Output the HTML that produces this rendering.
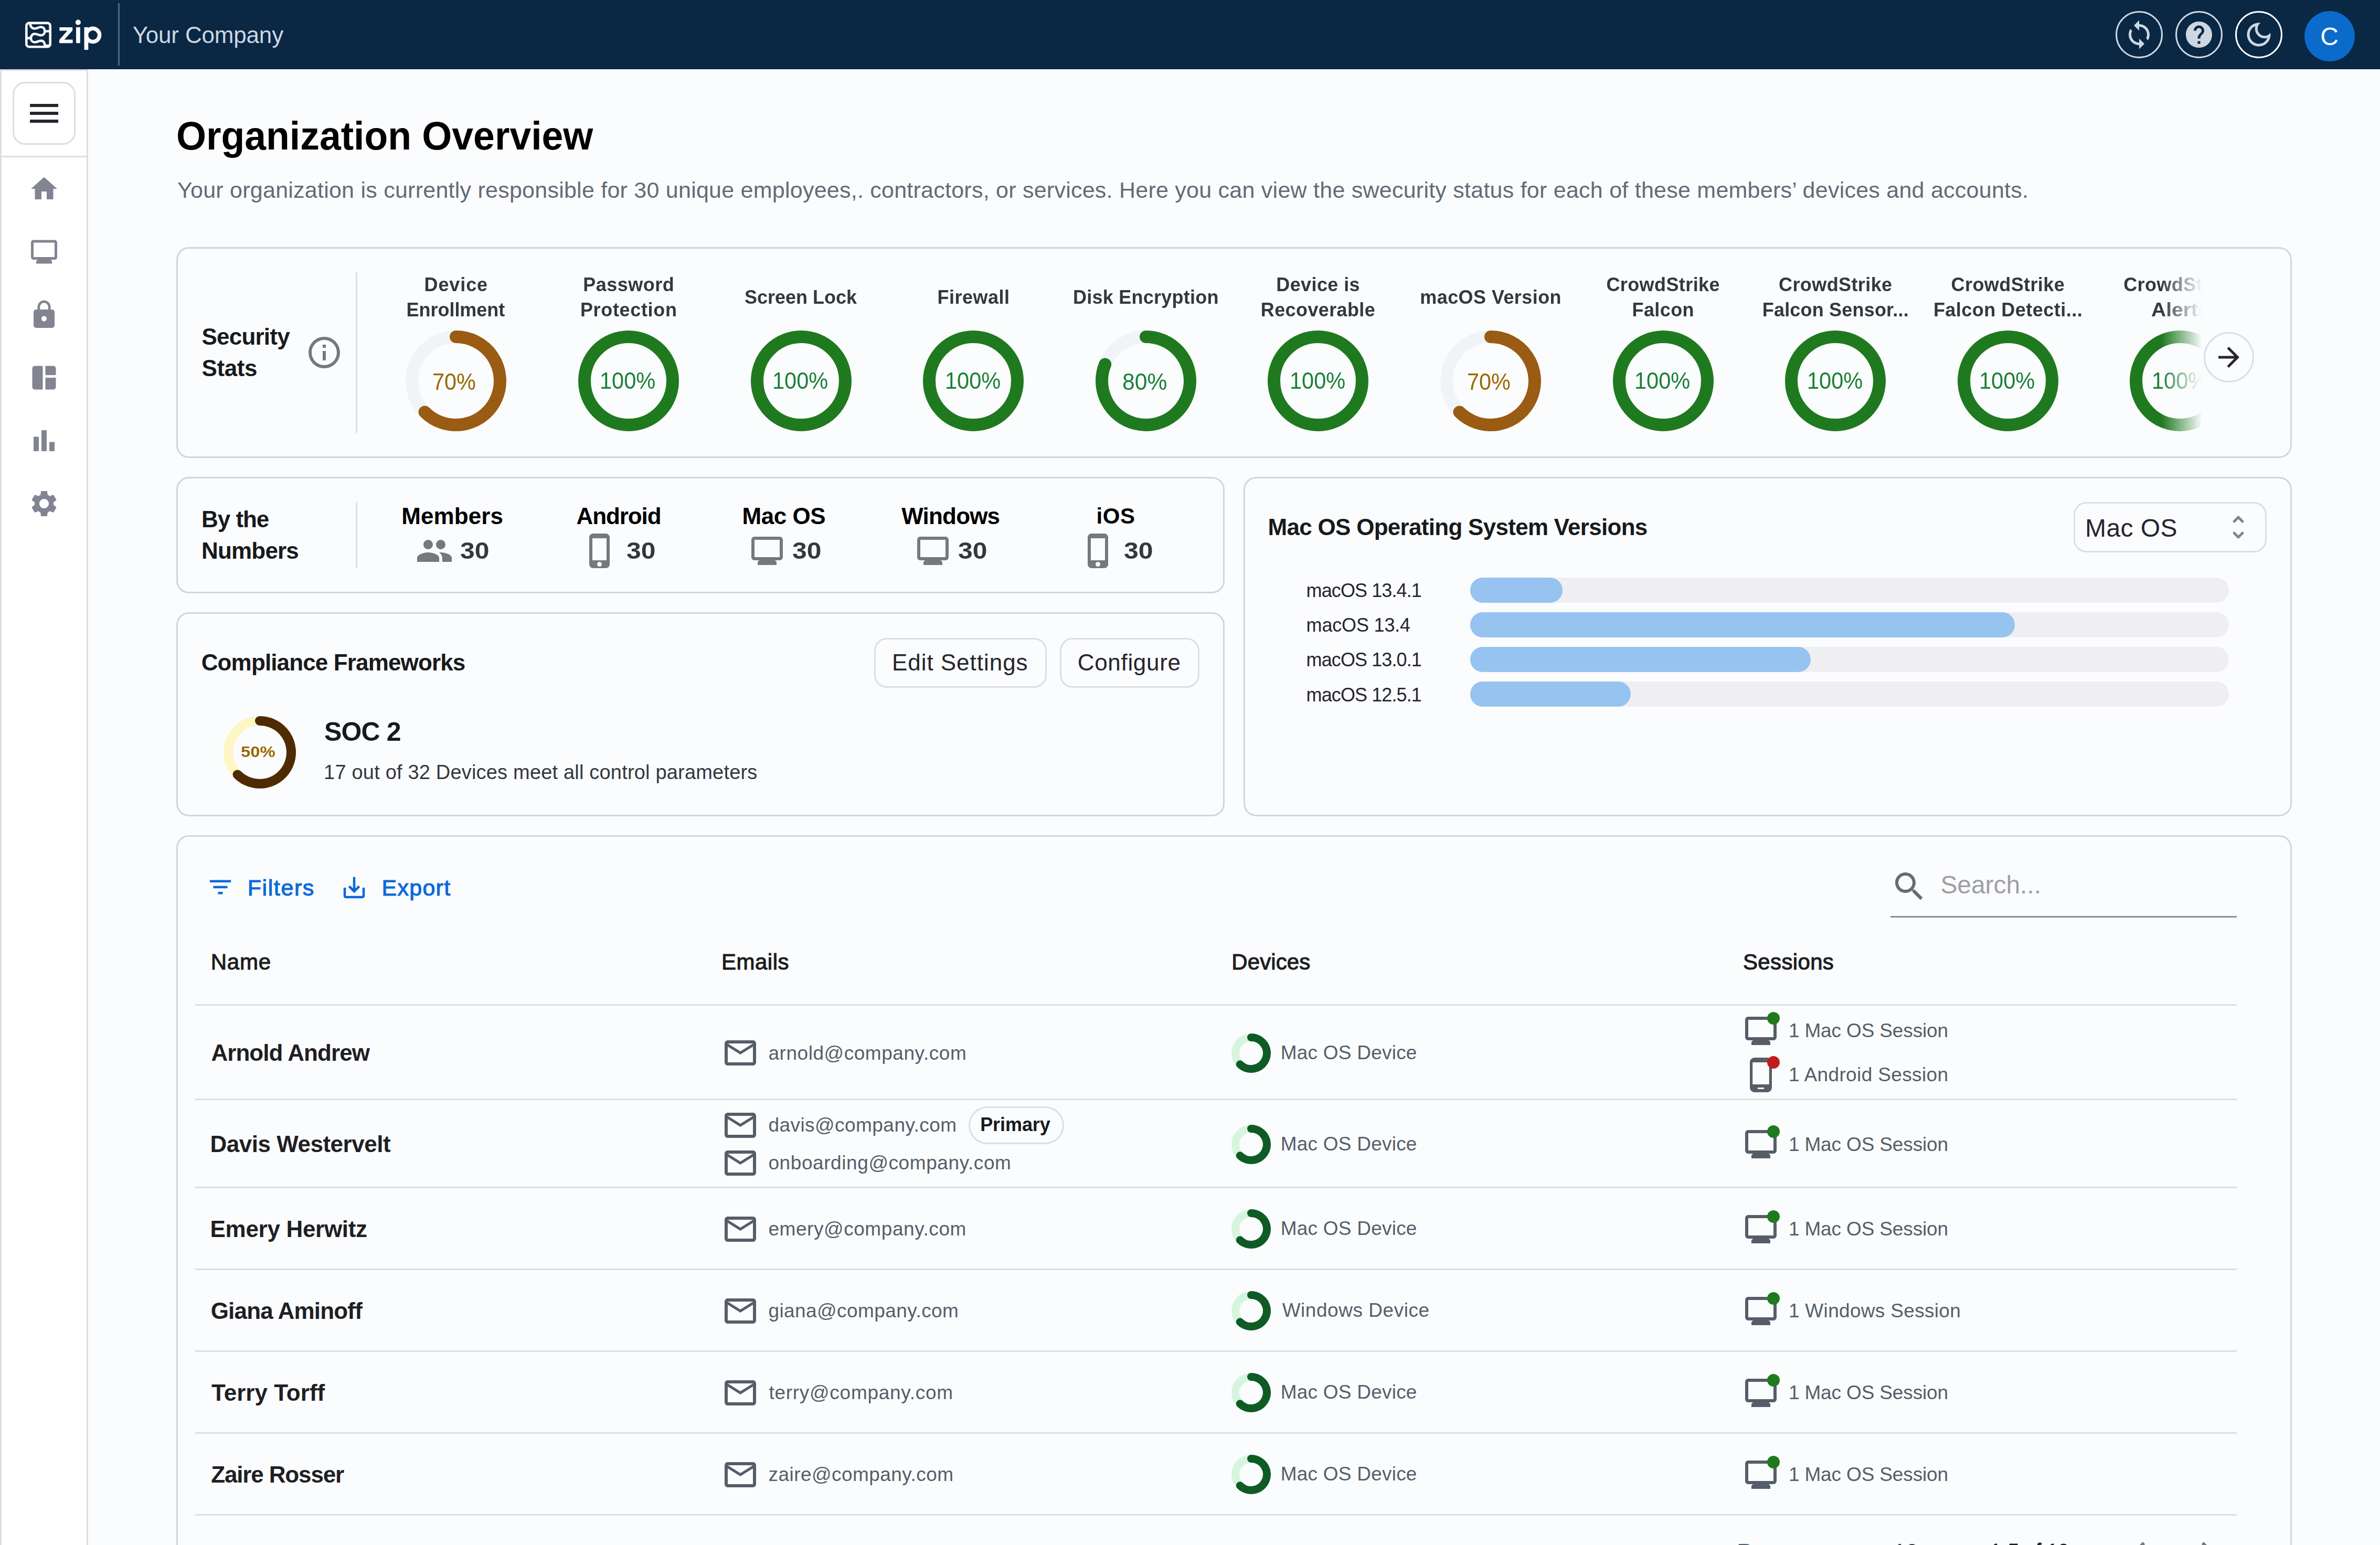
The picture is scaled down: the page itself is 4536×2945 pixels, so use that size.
<!DOCTYPE html>
<html lang="en"><head><meta charset="utf-8"><title>Organization Overview</title>
<style>
html,body{margin:0;padding:0}
body{width:4536px;height:2945px;overflow:hidden;position:relative;background:#FBFCFE;font-family:"Liberation Sans",sans-serif;}
#root{position:absolute;left:0;top:0;width:4536px;height:2945px;overflow:hidden;}
#root div,.a{position:absolute;}
.t{position:absolute;white-space:nowrap;line-height:1;transform-origin:0 0;}
svg{display:block;overflow:visible}
</style></head>
<body><div id="root">
<div style="left:0px;top:0px;width:4536px;height:132px;background:#0A2744;"></div>
<svg class="a" style="left:47.7px;top:41px" width="50" height="51" viewBox="0 -0.55 50 51" fill="none" stroke="#FAFAFA" stroke-width="4.6">
<rect x="2.3" y="2.3" width="45.4" height="45.4" rx="5.2"/>
<path d="M9.4 2.3 C9.4 8.6 12.6 13 18.2 13 C23 13 25 9.9 30 9.9 C34.5 9.9 37.3 13.5 37.3 17.9 C37.3 22.4 34.5 25.8 30 25.8 C25 25.8 23 23 18.2 23 C14 23 10.9 26.6 10.9 31.1 C10.9 35.6 14 38.9 18.2 38.9 C23 38.9 25 36.1 30 36.1 C34.5 36.1 37.3 39.5 37.6 45.4 L47 45.4"/>
<path d="M37.3 17.9 H47.7 M2.3 31.1 H10.9"/>
</svg>
<svg class="a" style="left:0;top:0" width="240" height="132" viewBox="0 0 240 132" fill="#FAFAFA"><path d="M113.4 51.9H138.2V58.2L122.6 75.6H138.6V82.2H113V75.9L128.4 58.5H113.4Z"/><rect x="145" y="51.9" width="7.8" height="30.3"/><circle cx="148.9" cy="42.6" r="5.1"/><rect x="160.5" y="51.9" width="7.8" height="43.1"/><circle cx="177" cy="66.9" r="12.6" fill="none" stroke="#FAFAFA" stroke-width="7.5"/></svg>
<div style="left:225px;top:6px;width:3px;height:119px;background:#4B6886;"></div>
<span class="t" style="left:252.63px;top:44.82px;font-size:44px;color:#CDD7E1;letter-spacing:-0.172px;">Your Company</span>
<div style="left:4032px;top:21px;width:90px;height:90px;border:3px solid #CDD7E1;border-radius:50%;box-sizing:border-box;"></div>
<svg class="a" style="left:4047px;top:36px" width="60" height="60" viewBox="0 0 24 24"><path fill="#CDD7E1" d="M12 4V1L8 5l4 4V6c3.31 0 6 2.69 6 6 0 1.01-.25 1.97-.7 2.8l1.46 1.46C19.54 15.03 20 13.57 20 12c0-4.42-3.58-8-8-8zm0 14c-3.31 0-6-2.69-6-6 0-1.01.25-1.97.7-2.8L5.24 7.74C4.46 8.97 4 10.43 4 12c0 4.42 3.58 8 8 8v3l4-4-4-4v3z"/></svg>
<div style="left:4146px;top:21px;width:90px;height:90px;border:3px solid #CDD7E1;border-radius:50%;box-sizing:border-box;"></div>
<svg class="a" style="left:4161px;top:36px" width="60" height="60" viewBox="0 0 24 24"><path fill="#CDD7E1" d="M12 2C6.48 2 2 6.48 2 12s4.48 10 10 10 10-4.48 10-10S17.52 2 12 2zm1 17h-2v-2h2v2zm2.07-7.75l-.9.92C13.45 12.9 13 13.5 13 15h-2v-.5c0-1.1.45-2.1 1.17-2.83l1.24-1.26c.37-.36.59-.86.59-1.41 0-1.1-.9-2-2-2s-2 .9-2 2H8c0-2.21 1.79-4 4-4s4 1.79 4 4c0 .88-.36 1.68-.93 2.25z"/></svg>
<div style="left:4260px;top:21px;width:90px;height:90px;border:3px solid #FFFFFF;border-radius:50%;box-sizing:border-box;"></div>
<svg class="a" style="left:4275px;top:36px" width="60" height="60" viewBox="0 0 24 24"><path fill="#CDD7E1" d="M9.37 5.51C9.19 6.15 9.1 6.82 9.1 7.5c0 4.08 3.32 7.4 7.4 7.4.68 0 1.35-.09 1.99-.27C17.45 17.19 14.93 19 12 19c-3.86 0-7-3.14-7-7 0-2.93 1.81-5.45 4.37-6.49zM12 3c-4.97 0-9 4.03-9 9s4.03 9 9 9 9-4.03 9-9c0-.46-.04-.92-.1-1.36-.98 1.37-2.58 2.26-4.4 2.26-2.98 0-5.4-2.42-5.4-5.4 0-1.81.89-3.42 2.26-4.4-.44-.06-.9-.1-1.36-.1z"/></svg>
<div style="left:4392px;top:21px;width:96px;height:96px;background:#0B6BCB;border-radius:50%;"></div>
<span class="t" style="left:4422.36px;top:46.24px;font-size:48px;color:#fff;">C</span>
<div style="left:0px;top:132px;width:168px;height:2813px;background:#fff;border:3px solid #DDDEE0;border-bottom:0;box-sizing:border-box;"></div>
<div style="left:0px;top:297px;width:168px;height:3px;background:#DDDEE0;"></div>
<div style="left:24px;top:156px;width:120px;height:120px;border:3px solid #DDDEE0;border-radius:24px;box-sizing:border-box;background:#fff;"></div>
<svg class="a" style="left:48px;top:180px" width="72" height="72" viewBox="0 0 24 24"><path fill="#25252D" d="M3 18h18v-2H3v2zm0-5h18v-2H3v2zm0-7v2h18V6H3z"/></svg>
<svg class="a" style="left:54px;top:330.3px" width="60" height="60" viewBox="0 0 24 24"><path fill="#828491" d="M10 20v-6h4v6h5v-8h3L12 3 2 12h3v8z"/></svg>
<svg class="a" style="left:54px;top:450.3px" width="60" height="60" viewBox="0 0 24 24"><path fill="#828491" d="M20 3H4c-1.1 0-2 .9-2 2v11c0 1.1.9 2 2 2h3l-1 1v2h12v-2l-1-1h3c1.1 0 2-.9 2-2V5c0-1.1-.9-2-2-2zm0 13H4V5h16v11z"/></svg>
<svg class="a" style="left:54px;top:570.3px" width="60" height="60" viewBox="0 0 24 24"><path fill="#828491" d="M18 8h-1V6c0-2.76-2.24-5-5-5S7 3.24 7 6v2H6c-1.1 0-2 .9-2 2v10c0 1.1.9 2 2 2h12c1.1 0 2-.9 2-2V10c0-1.1-.9-2-2-2zm-6 9c-1.1 0-2-.9-2-2s.9-2 2-2 2 .9 2 2-.9 2-2 2zm3.1-9H8.9V6c0-1.71 1.39-3.1 3.1-3.1 1.71 0 3.1 1.39 3.1 3.1v2z"/></svg>
<svg class="a" style="left:54px;top:690.3px" width="60" height="60" viewBox="0 0 24 24"><path fill="#828491" d="M11 21H5c-1.1 0-2-.9-2-2V5c0-1.1.9-2 2-2h6v18zm2 0h6c1.1 0 2-.9 2-2v-7h-8v9zm8-11V5c0-1.1-.9-2-2-2h-6v7h8z"/></svg>
<svg class="a" style="left:54px;top:810.3px" width="60" height="60" viewBox="0 0 24 24"><path fill="#828491" d="M4 9h4v11H4zm12 4h4v7h-4zm-6-9h4v16h-4z"/></svg>
<svg class="a" style="left:54px;top:930.3px" width="60" height="60" viewBox="0 0 24 24"><path fill="#828491" d="M19.14 12.94c.04-.3.06-.61.06-.94 0-.32-.02-.64-.07-.94l2.03-1.58c.18-.14.23-.41.12-.61l-1.92-3.32c-.12-.22-.37-.29-.59-.22l-2.39.96c-.5-.38-1.03-.7-1.62-.94l-.36-2.54c-.04-.24-.24-.41-.48-.41h-3.84c-.24 0-.43.17-.47.41l-.36 2.54c-.59.24-1.13.57-1.62.94l-2.39-.96c-.22-.08-.47 0-.59.22L2.74 8.87c-.12.21-.08.47.12.61l2.03 1.58c-.05.3-.09.63-.09.94s.02.64.07.94l-2.03 1.58c-.18.14-.23.41-.12.61l1.92 3.32c.12.22.37.29.59.22l2.39-.96c.5.38 1.03.7 1.62.94l.36 2.54c.05.24.24.41.48.41h3.84c.24 0 .44-.17.47-.41l.36-2.54c.59-.24 1.13-.56 1.62-.94l2.39.96c.22.08.47 0 .59-.22l1.92-3.32c.12-.22.07-.47-.12-.61l-2.01-1.58zM12 15.6c-1.98 0-3.6-1.62-3.6-3.6s1.62-3.6 3.6-3.6 3.6 1.62 3.6 3.6-1.62 3.6-3.6 3.6z"/></svg>
<span class="t" style="left:336.49px;top:220.58px;font-size:76px;color:#000;font-weight:700;transform:scaleX(0.9645);">Organization Overview</span>
<span class="t" style="left:338.06px;top:341.47px;font-size:43px;color:#636B74;letter-spacing:0.243px;">Your organization is currently responsible for 30 unique employees,. contractors, or services. Here you can view the swecurity status for each of these members’ devices and accounts.</span>
<div style="left:336px;top:471px;width:4032px;height:402px;border:3px solid #CDD7E1;border-radius:24px;box-sizing:border-box;background:#FBFCFE;"></div>
<span class="t" style="left:384.53px;top:619.72px;font-size:44px;color:#171A1C;font-weight:700;letter-spacing:-0.791px;">Security</span>
<span class="t" style="left:384.53px;top:679.82px;font-size:44px;color:#171A1C;font-weight:700;letter-spacing:-0.381px;">Stats</span>
<svg class="a" style="left:582px;top:636px" width="72" height="72" viewBox="0 0 24 24"><path fill="#77787C" d="M11 7h2v2h-2zm0 4h2v6h-2zm1-9C6.48 2 2 6.48 2 12s4.48 10 10 10 10-4.48 10-10S17.52 2 12 2zm0 18c-4.41 0-8-3.59-8-8s3.59-8 8-8 8 3.59 8 8-3.59 8-8 8z"/></svg>
<div style="left:678px;top:519px;width:3px;height:306px;background:#DDDEE0;"></div>
<div class="a" style="left:681px;top:474px;width:3516px;height:396px;overflow:hidden;-webkit-mask-image:linear-gradient(to right,#000 0,#000 3439px,transparent 3516px);mask-image:linear-gradient(to right,#000 0,#000 3439px,transparent 3516px);">
<span class="t" style="left:127.49px;top:51.08px;font-size:36px;color:#32383E;font-weight:700;letter-spacing:0.910px;">Device</span>
<span class="t" style="left:93.59px;top:98.98px;font-size:36px;color:#32383E;font-weight:700;letter-spacing:-0.041px;">Enrollment</span>
<svg class="a" style="left:92.39999999999998px;top:156.0px" width="192" height="192" viewBox="0 0 192 192"><circle cx="96.0" cy="96.0" r="84.0" fill="none" stroke="#F0F4F8" stroke-width="24"/><path d="M96.0 12.0 A84.0 84.0 0 1 1 36.60 155.40" fill="none" stroke="#9A5B13" stroke-width="24" stroke-linecap="round"/></svg>
<span class="t" style="left:142.93px;top:232.22px;font-size:44px;color:#9A6700;transform:scaleX(0.9414);">70%</span>
<span class="t" style="left:430.14px;top:51.08px;font-size:36px;color:#32383E;font-weight:700;letter-spacing:0.516px;">Password</span>
<span class="t" style="left:424.89px;top:98.98px;font-size:36px;color:#32383E;font-weight:700;letter-spacing:0.670px;">Protection</span>
<svg class="a" style="left:421.0px;top:156.0px" width="192" height="192" viewBox="0 0 192 192"><circle cx="96.0" cy="96.0" r="84.0" fill="none" stroke="#F0F4F8" stroke-width="24"/><circle cx="96.0" cy="96.0" r="84.0" fill="none" stroke="#1F7A1F" stroke-width="24"/></svg>
<span class="t" style="left:462.48px;top:229.62px;font-size:44px;color:#1A7F37;transform:scaleX(0.9450);">100%</span>
<span class="t" style="left:738.06px;top:74.98px;font-size:36px;color:#32383E;font-weight:700;letter-spacing:-0.010px;">Screen Lock</span>
<svg class="a" style="left:749.5999999999999px;top:156.0px" width="192" height="192" viewBox="0 0 192 192"><circle cx="96.0" cy="96.0" r="84.0" fill="none" stroke="#F0F4F8" stroke-width="24"/><circle cx="96.0" cy="96.0" r="84.0" fill="none" stroke="#1F7A1F" stroke-width="24"/></svg>
<span class="t" style="left:791.08px;top:229.62px;font-size:44px;color:#1A7F37;transform:scaleX(0.9450);">100%</span>
<span class="t" style="left:1105.59px;top:74.98px;font-size:36px;color:#32383E;font-weight:700;letter-spacing:0.472px;">Firewall</span>
<svg class="a" style="left:1078.2px;top:156.0px" width="192" height="192" viewBox="0 0 192 192"><circle cx="96.0" cy="96.0" r="84.0" fill="none" stroke="#F0F4F8" stroke-width="24"/><circle cx="96.0" cy="96.0" r="84.0" fill="none" stroke="#1F7A1F" stroke-width="24"/></svg>
<span class="t" style="left:1119.68px;top:229.62px;font-size:44px;color:#1A7F37;transform:scaleX(0.9450);">100%</span>
<span class="t" style="left:1364.04px;top:74.98px;font-size:36px;color:#32383E;font-weight:700;letter-spacing:0.234px;">Disk Encryption</span>
<svg class="a" style="left:1406.8000000000002px;top:156.0px" width="192" height="192" viewBox="0 0 192 192"><circle cx="96.0" cy="96.0" r="84.0" fill="none" stroke="#F0F4F8" stroke-width="24"/><path d="M96.0 12.0 A84.0 84.0 0 1 1 18.12 64.53" fill="none" stroke="#1F7A1F" stroke-width="24" stroke-linecap="round"/></svg>
<span class="t" style="left:1457.95px;top:232.22px;font-size:44px;color:#1A7F37;transform:scaleX(0.9694);">80%</span>
<span class="t" style="left:1751.24px;top:51.08px;font-size:36px;color:#32383E;font-weight:700;letter-spacing:0.409px;">Device is</span>
<span class="t" style="left:1721.84px;top:98.98px;font-size:36px;color:#32383E;font-weight:700;letter-spacing:0.382px;">Recoverable</span>
<svg class="a" style="left:1735.4px;top:156.0px" width="192" height="192" viewBox="0 0 192 192"><circle cx="96.0" cy="96.0" r="84.0" fill="none" stroke="#F0F4F8" stroke-width="24"/><circle cx="96.0" cy="96.0" r="84.0" fill="none" stroke="#1F7A1F" stroke-width="24"/></svg>
<span class="t" style="left:1776.88px;top:229.62px;font-size:44px;color:#1A7F37;transform:scaleX(0.9450);">100%</span>
<span class="t" style="left:2025.28px;top:74.98px;font-size:36px;color:#32383E;font-weight:700;letter-spacing:0.431px;">macOS Version</span>
<svg class="a" style="left:2064.0px;top:156.0px" width="192" height="192" viewBox="0 0 192 192"><circle cx="96.0" cy="96.0" r="84.0" fill="none" stroke="#F0F4F8" stroke-width="24"/><path d="M96.0 12.0 A84.0 84.0 0 1 1 36.60 155.40" fill="none" stroke="#9A5B13" stroke-width="24" stroke-linecap="round"/></svg>
<span class="t" style="left:2114.53px;top:232.22px;font-size:44px;color:#9A6700;transform:scaleX(0.9414);">70%</span>
<span class="t" style="left:2380.42px;top:51.08px;font-size:36px;color:#32383E;font-weight:700;letter-spacing:0.406px;">CrowdStrike</span>
<span class="t" style="left:2429.49px;top:98.98px;font-size:36px;color:#32383E;font-weight:700;letter-spacing:0.405px;">Falcon</span>
<svg class="a" style="left:2392.6000000000004px;top:156.0px" width="192" height="192" viewBox="0 0 192 192"><circle cx="96.0" cy="96.0" r="84.0" fill="none" stroke="#F0F4F8" stroke-width="24"/><circle cx="96.0" cy="96.0" r="84.0" fill="none" stroke="#1F7A1F" stroke-width="24"/></svg>
<span class="t" style="left:2434.08px;top:229.62px;font-size:44px;color:#1A7F37;transform:scaleX(0.9450);">100%</span>
<span class="t" style="left:2709.02px;top:51.08px;font-size:36px;color:#32383E;font-weight:700;letter-spacing:0.406px;">CrowdStrike</span>
<span class="t" style="left:2677.79px;top:98.98px;font-size:36px;color:#32383E;font-weight:700;letter-spacing:0.187px;">Falcon Sensor...</span>
<svg class="a" style="left:2721.2000000000003px;top:156.0px" width="192" height="192" viewBox="0 0 192 192"><circle cx="96.0" cy="96.0" r="84.0" fill="none" stroke="#F0F4F8" stroke-width="24"/><circle cx="96.0" cy="96.0" r="84.0" fill="none" stroke="#1F7A1F" stroke-width="24"/></svg>
<span class="t" style="left:2762.68px;top:229.62px;font-size:44px;color:#1A7F37;transform:scaleX(0.9450);">100%</span>
<span class="t" style="left:3037.62px;top:51.08px;font-size:36px;color:#32383E;font-weight:700;letter-spacing:0.406px;">CrowdStrike</span>
<span class="t" style="left:3003.89px;top:98.98px;font-size:36px;color:#32383E;font-weight:700;letter-spacing:0.489px;">Falcon Detecti...</span>
<svg class="a" style="left:3049.8px;top:156.0px" width="192" height="192" viewBox="0 0 192 192"><circle cx="96.0" cy="96.0" r="84.0" fill="none" stroke="#F0F4F8" stroke-width="24"/><circle cx="96.0" cy="96.0" r="84.0" fill="none" stroke="#1F7A1F" stroke-width="24"/></svg>
<span class="t" style="left:3091.28px;top:229.62px;font-size:44px;color:#1A7F37;transform:scaleX(0.9450);">100%</span>
<span class="t" style="left:3366.22px;top:51.08px;font-size:36px;color:#32383E;font-weight:700;letter-spacing:0.406px;">CrowdStrike</span>
<span class="t" style="left:3419.43px;top:98.98px;font-size:36px;color:#32383E;font-weight:700;transform:scaleX(1.0836);">Alerts</span>
<svg class="a" style="left:3378.3999999999996px;top:156.0px" width="192" height="192" viewBox="0 0 192 192"><circle cx="96.0" cy="96.0" r="84.0" fill="none" stroke="#F0F4F8" stroke-width="24"/><circle cx="96.0" cy="96.0" r="84.0" fill="none" stroke="#1F7A1F" stroke-width="24"/></svg>
<span class="t" style="left:3419.88px;top:229.62px;font-size:44px;color:#1A7F37;transform:scaleX(0.9450);">100%</span>
</div>
<div style="left:4200px;top:633px;width:96px;height:96px;border:3px solid #DDDEE0;border-radius:50%;box-sizing:border-box;background:#FBFCFE;"></div>
<svg class="a" style="left:4218px;top:651px" width="60" height="60" viewBox="0 0 24 24"><path fill="#25252D" d="M12 4l-1.41 1.41L16.17 11H4v2h12.17l-5.58 5.59L12 20l8-8z"/></svg>
<div style="left:336px;top:909px;width:1998px;height:222px;border:3px solid #CDD7E1;border-radius:24px;box-sizing:border-box;background:#FBFCFE;"></div>
<span class="t" style="left:384.06px;top:967.62px;font-size:44px;color:#171A1C;font-weight:700;letter-spacing:-1.045px;">By the</span>
<span class="t" style="left:384.06px;top:1027.82px;font-size:44px;color:#171A1C;font-weight:700;letter-spacing:-0.828px;">Numbers</span>
<div style="left:678px;top:957px;width:3px;height:126px;background:#DDDEE0;"></div>
<span class="t" style="left:765.16px;top:961.62px;font-size:44px;color:#000;font-weight:700;letter-spacing:0.093px;">Members</span>
<svg class="a" style="left:792px;top:1014.2px" width="72" height="72" viewBox="0 0 24 24"><path fill="#77787C" d="M16 11c1.66 0 2.99-1.34 2.99-3S17.66 5 16 5c-1.66 0-3 1.34-3 3s1.34 3 3 3zm-8 0c1.66 0 2.99-1.34 2.99-3S9.66 5 8 5C6.34 5 5 6.34 5 8s1.34 3 3 3zm0 2c-2.33 0-7 1.17-7 3.5V19h14v-2.5c0-2.33-4.67-3.5-7-3.5zm8 0c-.29 0-.62.02-.97.05 1.16.84 1.97 1.97 1.97 3.45V19h6v-2.5c0-2.33-4.67-3.5-7-3.5z"/></svg>
<span class="t" style="left:877.16px;top:1027.62px;font-size:44px;color:#32383E;font-weight:700;transform:scaleX(1.1338);">30</span>
<span class="t" style="left:1098.60px;top:961.62px;font-size:44px;color:#000;font-weight:700;letter-spacing:-1.106px;">Android</span>
<svg class="a" style="left:1108.3px;top:1014.2px" width="72" height="72" viewBox="0 0 24 24"><path fill="#77787C" d="M15.5 1h-8C6.12 1 5 2.12 5 3.5v17C5 21.88 6.12 23 7.5 23h8c1.38 0 2.5-1.12 2.5-2.5v-17C18 2.12 16.88 1 15.5 1zm-4 21c-.83 0-1.5-.67-1.5-1.5s.67-1.5 1.5-1.5 1.5.67 1.5 1.5-.67 1.5-1.5 1.5zm4.5-4H7V4h9v14z"/></svg>
<span class="t" style="left:1193.56px;top:1027.62px;font-size:44px;color:#32383E;font-weight:700;transform:scaleX(1.1338);">30</span>
<span class="t" style="left:1414.46px;top:961.62px;font-size:44px;color:#000;font-weight:700;letter-spacing:-0.466px;">Mac OS</span>
<svg class="a" style="left:1425.5px;top:1014.2px" width="72" height="72" viewBox="0 0 24 24"><path fill="#77787C" d="M20 3H4c-1.1 0-2 .9-2 2v11c0 1.1.9 2 2 2h3l-1 1v2h12v-2l-1-1h3c1.1 0 2-.9 2-2V5c0-1.1-.9-2-2-2zm0 13H4V5h16v11z"/></svg>
<span class="t" style="left:1509.76px;top:1027.62px;font-size:44px;color:#32383E;font-weight:700;transform:scaleX(1.1338);">30</span>
<span class="t" style="left:1718.26px;top:961.62px;font-size:44px;color:#000;font-weight:700;letter-spacing:-0.808px;">Windows</span>
<svg class="a" style="left:1741.8px;top:1014.2px" width="72" height="72" viewBox="0 0 24 24"><path fill="#77787C" d="M20 3H4c-1.1 0-2 .9-2 2v11c0 1.1.9 2 2 2h3l-1 1v2h12v-2l-1-1h3c1.1 0 2-.9 2-2V5c0-1.1-.9-2-2-2zm0 13H4V5h16v11z"/></svg>
<span class="t" style="left:1826.06px;top:1027.62px;font-size:44px;color:#32383E;font-weight:700;transform:scaleX(1.1338);">30</span>
<span class="t" style="left:2089.57px;top:963.31px;font-size:42px;color:#000;font-weight:700;letter-spacing:0.611px;">iOS</span>
<svg class="a" style="left:2057.5px;top:1014.2px" width="72" height="72" viewBox="0 0 24 24"><path fill="#77787C" d="M15.5 1h-8C6.12 1 5 2.12 5 3.5v17C5 21.88 6.12 23 7.5 23h8c1.38 0 2.5-1.12 2.5-2.5v-17C18 2.12 16.88 1 15.5 1zm-4 21c-.83 0-1.5-.67-1.5-1.5s.67-1.5 1.5-1.5 1.5.67 1.5 1.5-.67 1.5-1.5 1.5zm4.5-4H7V4h9v14z"/></svg>
<span class="t" style="left:2141.86px;top:1027.62px;font-size:44px;color:#32383E;font-weight:700;transform:scaleX(1.1338);">30</span>
<div style="left:336px;top:1167px;width:1998px;height:389px;border:3px solid #CDD7E1;border-radius:24px;box-sizing:border-box;background:#FBFCFE;"></div>
<span class="t" style="left:383.70px;top:1241.42px;font-size:44px;color:#171A1C;font-weight:700;letter-spacing:-0.862px;">Compliance Frameworks</span>
<div style="left:1665.5px;top:1215.5px;width:329px;height:95.5px;border:3px solid #DDDEE0;border-radius:24px;box-sizing:border-box;"></div>
<span class="t" style="left:1699.89px;top:1240.52px;font-size:44px;color:#25252D;letter-spacing:0.973px;">Edit Settings</span>
<div style="left:2019.5px;top:1215.5px;width:266.5px;height:95.5px;border:3px solid #DDDEE0;border-radius:24px;box-sizing:border-box;"></div>
<span class="t" style="left:2053.77px;top:1240.52px;font-size:44px;color:#25252D;letter-spacing:0.676px;">Configure</span>
<svg class="a" style="left:425.9px;top:1365.0px" width="138" height="138" viewBox="0 0 138 138"><circle cx="69.0" cy="69.0" r="60.0" fill="none" stroke="#FEF7C3" stroke-width="18"/><path d="M69.0 9.0 A60.0 60.0 0 1 1 26.57 111.43" fill="none" stroke="#4E2B02" stroke-width="18" stroke-linecap="round"/></svg>
<span class="t" style="left:459.44px;top:1417.85px;font-size:30px;color:#9A6700;font-weight:700;transform:scaleX(1.0921);">50%</span>
<span class="t" style="left:618.06px;top:1369.95px;font-size:50px;color:#171A1C;font-weight:700;letter-spacing:-0.902px;">SOC 2</span>
<span class="t" style="left:617.11px;top:1453.19px;font-size:38px;color:#32383E;letter-spacing:0.188px;">17 out of 32 Devices meet all control parameters</span>
<div style="left:2370px;top:909px;width:1998px;height:647px;border:3px solid #CDD7E1;border-radius:24px;box-sizing:border-box;background:#FBFCFE;"></div>
<span class="t" style="left:2416.56px;top:983.12px;font-size:44px;color:#171A1C;font-weight:700;letter-spacing:-0.712px;">Mac OS Operating System Versions</span>
<div style="left:3951.5px;top:957px;width:368px;height:95.5px;border:3px solid #DDDEE0;border-radius:24px;box-sizing:border-box;"></div>
<span class="t" style="left:3974.06px;top:983.04px;font-size:48px;color:#25252D;letter-spacing:0.435px;">Mac OS</span>
<svg class="a" style="left:4236px;top:975px" width="60" height="60" viewBox="0 0 24 24"><path fill="#828491" d="m12 5.83 2.46 2.46c.39.39 1.02.39 1.41 0 .39-.39.39-1.02 0-1.41L12.7 3.7a.9959.9959 0 0 0-1.41 0L8.12 6.88c-.39.39-.39 1.02 0 1.41.39.39 1.02.39 1.41 0L12 5.83zm0 12.34-2.46-2.46a.9959.9959 0 0 0-1.41 0c-.39.39-.39 1.02 0 1.41l3.17 3.18c.39.39 1.02.39 1.41 0l3.17-3.17c.39-.39.39-1.02 0-1.41a.9959.9959 0 0 0-1.41 0L12 18.17z"/></svg>
<span class="t" style="left:2489.61px;top:1108.28px;font-size:36px;color:#25252D;letter-spacing:-0.906px;">macOS 13.4.1</span>
<div style="left:2802px;top:1101.3px;width:1446px;height:47.5px;background:#EFEFF1;border-radius:24px;"></div>
<div style="left:2802px;top:1101.3px;width:176px;height:47.5px;background:#97C3F0;border-radius:24px;"></div>
<span class="t" style="left:2489.61px;top:1174.38px;font-size:36px;color:#25252D;letter-spacing:-0.183px;">macOS 13.4</span>
<div style="left:2802px;top:1167.3px;width:1446px;height:47.5px;background:#EFEFF1;border-radius:24px;"></div>
<div style="left:2802px;top:1167.3px;width:1038px;height:47.5px;background:#97C3F0;border-radius:24px;"></div>
<span class="t" style="left:2489.61px;top:1240.48px;font-size:36px;color:#25252D;letter-spacing:-0.906px;">macOS 13.0.1</span>
<div style="left:2802px;top:1233.3px;width:1446px;height:47.5px;background:#EFEFF1;border-radius:24px;"></div>
<div style="left:2802px;top:1233.3px;width:649px;height:47.5px;background:#97C3F0;border-radius:24px;"></div>
<span class="t" style="left:2489.61px;top:1306.58px;font-size:36px;color:#25252D;letter-spacing:-0.906px;">macOS 12.5.1</span>
<div style="left:2802px;top:1299.3px;width:1446px;height:47.5px;background:#EFEFF1;border-radius:24px;"></div>
<div style="left:2802px;top:1299.3px;width:306px;height:47.5px;background:#97C3F0;border-radius:24px;"></div>
<div style="left:336px;top:1592px;width:4032px;height:1500px;border:3px solid #CDD7E1;border-radius:24px;box-sizing:border-box;background:#FBFCFE;"></div>
<svg class="a" style="left:393px;top:1664px" width="54" height="54" viewBox="0 0 24 24"><path fill="#0969DA" d="M10 18h4v-2h-4v2zM3 6v2h18V6H3zm3 7h12v-2H6v2z"/></svg>
<span class="t" style="left:471.73px;top:1670.76px;font-size:43px;color:#0969DA;-webkit-text-stroke-width:1.12px;letter-spacing:1.585px;">Filters</span>
<svg class="a" style="left:647.5px;top:1665px" width="54" height="54" viewBox="0 0 24 24"><path fill="#0969DA" d="M19 12v7H5v-7H3v7c0 1.1.9 2 2 2h14c1.1 0 2-.9 2-2v-7h-2zm-6 .67l2.59-2.58L17 11.5l-5 5-5-5 1.41-1.41L11 12.67V3h2z"/></svg>
<span class="t" style="left:727.43px;top:1670.76px;font-size:43px;color:#0969DA;-webkit-text-stroke-width:1.12px;letter-spacing:1.290px;">Export</span>
<svg class="a" style="left:3603.3px;top:1653.6px" width="72" height="72" viewBox="0 0 24 24"><path fill="#6B6C70" d="M15.5 14h-.79l-.28-.27C15.41 12.59 16 11.11 16 9.5 16 5.91 13.09 3 9.5 3S3 5.91 3 9.5 5.91 16 9.5 16c1.61 0 3.09-.59 4.23-1.57l.27.28v.79l5 4.99L20.49 19l-4.99-5zm-6 0C7.01 14 5 11.99 5 9.5S7.01 5 9.5 5 14 7.01 14 9.5 11.99 14 9.5 14z"/></svg>
<span class="t" style="left:3698.42px;top:1662.84px;font-size:48px;color:#9E9FA2;letter-spacing:-0.066px;">Search...</span>
<div style="left:3603px;top:1745.5px;width:660px;height:3px;background:#8B8C8F;"></div>
<span class="t" style="left:401.80px;top:1813.11px;font-size:42px;color:#1C1C20;-webkit-text-stroke-width:1.09px;letter-spacing:0.728px;">Name</span>
<span class="t" style="left:1375.00px;top:1813.11px;font-size:42px;color:#1C1C20;-webkit-text-stroke-width:1.09px;letter-spacing:0.490px;">Emails</span>
<span class="t" style="left:2347.20px;top:1813.11px;font-size:42px;color:#1C1C20;-webkit-text-stroke-width:1.09px;letter-spacing:0.132px;">Devices</span>
<span class="t" style="left:3321.94px;top:1813.11px;font-size:42px;color:#1C1C20;-webkit-text-stroke-width:1.09px;letter-spacing:0.359px;">Sessions</span>
<div style="left:372px;top:1914px;width:3891px;height:3px;background:#DDDEE0;"></div>
<div style="left:372px;top:2094px;width:3891px;height:3px;background:#DDDEE0;"></div>
<div style="left:372px;top:2262px;width:3891px;height:3px;background:#DDDEE0;"></div>
<div style="left:372px;top:2418px;width:3891px;height:3px;background:#DDDEE0;"></div>
<div style="left:372px;top:2574px;width:3891px;height:3px;background:#DDDEE0;"></div>
<div style="left:372px;top:2730px;width:3891px;height:3px;background:#DDDEE0;"></div>
<div style="left:372px;top:2886px;width:3891px;height:3px;background:#DDDEE0;"></div>
<span class="t" style="left:402.40px;top:1984.72px;font-size:44px;color:#1F1F23;font-weight:700;letter-spacing:-0.932px;">Arnold Andrew</span>
<span class="t" style="left:400.56px;top:2158.72px;font-size:44px;color:#1F1F23;font-weight:700;letter-spacing:-0.493px;">Davis Westervelt</span>
<span class="t" style="left:400.56px;top:2320.72px;font-size:44px;color:#1F1F23;font-weight:700;letter-spacing:-0.308px;">Emery Herwitz</span>
<span class="t" style="left:401.70px;top:2476.72px;font-size:44px;color:#1F1F23;font-weight:700;letter-spacing:-0.827px;">Giana Aminoff</span>
<span class="t" style="left:403.01px;top:2632.72px;font-size:44px;color:#1F1F23;font-weight:700;letter-spacing:0.027px;">Terry Torff</span>
<span class="t" style="left:402.19px;top:2788.72px;font-size:44px;color:#1F1F23;font-weight:700;letter-spacing:-1.146px;">Zaire Rosser</span>
<svg class="a" style="left:1375.3px;top:1971.3px" width="72" height="72" viewBox="0 0 24 24"><path fill="#555E68" d="M20 4H4c-1.1 0-1.99.9-1.99 2L2 18c0 1.1.9 2 2 2h16c1.1 0 2-.9 2-2V6c0-1.1-.9-2-2-2zm0 14H4V8l8 5 8-5v10zm-8-7L4 6h16l-8 5z"/></svg>
<span class="t" style="left:1464.43px;top:1988.63px;font-size:37px;color:#555E68;letter-spacing:0.549px;">arnold@company.com</span>
<svg class="a" style="left:2347.3px;top:1969.6px" width="75" height="75" viewBox="0 0 75 75"><circle cx="37.5" cy="37.5" r="30.0" fill="none" stroke="#D7F5DE" stroke-width="15"/><path d="M37.5 7.5 A30.0 30.0 0 1 1 16.29 58.71" fill="none" stroke="#0E5B25" stroke-width="15" stroke-linecap="round"/></svg>
<span class="t" style="left:2440.76px;top:1987.53px;font-size:37px;color:#555E68;letter-spacing:0.222px;">Mac OS Device</span>
<svg class="a" style="left:3320.3px;top:1929px" width="72" height="72" viewBox="0 0 24 24"><path fill="#555E68" d="M20 3H4c-1.1 0-2 .9-2 2v11c0 1.1.9 2 2 2h3l-1 1v2h12v-2l-1-1h3c1.1 0 2-.9 2-2V5c0-1.1-.9-2-2-2zm0 13H4V5h16v11z"/></svg>
<div style="left:3368px;top:1929px;width:24px;height:24px;background:#1F7A1F;border-radius:50%;"></div>
<span class="t" style="left:3408.88px;top:1946.33px;font-size:37px;color:#555E68;letter-spacing:-0.146px;">1 Mac OS Session</span>
<svg class="a" style="left:3320.3px;top:2012.6px" width="72" height="72" viewBox="0 0 24 24"><path fill="#555E68" d="M16 1H8C6.34 1 5 2.34 5 4v16c0 1.66 1.34 3 3 3h8c1.66 0 3-1.34 3-3V4c0-1.66-1.34-3-3-3zm-2 20h-4v-1h4v1zm3.25-3H6.75V4h10.5v14z"/></svg>
<div style="left:3368px;top:2012.6px;width:24px;height:24px;background:#C41C1C;border-radius:50%;"></div>
<span class="t" style="left:3408.88px;top:2029.93px;font-size:37px;color:#555E68;letter-spacing:0.373px;">1 Android Session</span>
<svg class="a" style="left:1375.3px;top:2109px" width="72" height="72" viewBox="0 0 24 24"><path fill="#555E68" d="M20 4H4c-1.1 0-1.99.9-1.99 2L2 18c0 1.1.9 2 2 2h16c1.1 0 2-.9 2-2V6c0-1.1-.9-2-2-2zm0 14H4V8l8 5 8-5v10zm-8-7L4 6h16l-8 5z"/></svg>
<span class="t" style="left:1464.45px;top:2126.34px;font-size:37px;color:#555E68;letter-spacing:0.450px;">davis@company.com</span>
<div style="left:1846.3px;top:2109px;width:182px;height:72px;border:3px solid #DDDEE0;border-radius:36px;box-sizing:border-box;"></div>
<span class="t" style="left:1868.19px;top:2126.38px;font-size:36px;color:#171A1C;font-weight:700;letter-spacing:-0.081px;">Primary</span>
<svg class="a" style="left:1375.3px;top:2181px" width="72" height="72" viewBox="0 0 24 24"><path fill="#555E68" d="M20 4H4c-1.1 0-1.99.9-1.99 2L2 18c0 1.1.9 2 2 2h16c1.1 0 2-.9 2-2V6c0-1.1-.9-2-2-2zm0 14H4V8l8 5 8-5v10zm-8-7L4 6h16l-8 5z"/></svg>
<span class="t" style="left:1464.45px;top:2198.34px;font-size:37px;color:#555E68;letter-spacing:0.579px;">onboarding@company.com</span>
<svg class="a" style="left:2347.3px;top:2143.6000000000004px" width="75" height="75" viewBox="0 0 75 75"><circle cx="37.5" cy="37.5" r="30.0" fill="none" stroke="#D7F5DE" stroke-width="15"/><path d="M37.5 7.5 A30.0 30.0 0 1 1 16.29 58.71" fill="none" stroke="#0E5B25" stroke-width="15" stroke-linecap="round"/></svg>
<span class="t" style="left:2440.76px;top:2161.54px;font-size:37px;color:#555E68;letter-spacing:0.222px;">Mac OS Device</span>
<svg class="a" style="left:3320.3px;top:2145.4px" width="72" height="72" viewBox="0 0 24 24"><path fill="#555E68" d="M20 3H4c-1.1 0-2 .9-2 2v11c0 1.1.9 2 2 2h3l-1 1v2h12v-2l-1-1h3c1.1 0 2-.9 2-2V5c0-1.1-.9-2-2-2zm0 13H4V5h16v11z"/></svg>
<div style="left:3368px;top:2145.4px;width:24px;height:24px;background:#1F7A1F;border-radius:50%;"></div>
<span class="t" style="left:3408.88px;top:2162.74px;font-size:37px;color:#555E68;letter-spacing:-0.146px;">1 Mac OS Session</span>
<svg class="a" style="left:1375.3px;top:2306.9px" width="72" height="72" viewBox="0 0 24 24"><path fill="#555E68" d="M20 4H4c-1.1 0-1.99.9-1.99 2L2 18c0 1.1.9 2 2 2h16c1.1 0 2-.9 2-2V6c0-1.1-.9-2-2-2zm0 14H4V8l8 5 8-5v10zm-8-7L4 6h16l-8 5z"/></svg>
<span class="t" style="left:1464.43px;top:2324.24px;font-size:37px;color:#555E68;letter-spacing:0.562px;">emery@company.com</span>
<svg class="a" style="left:2347.3px;top:2305.3px" width="75" height="75" viewBox="0 0 75 75"><circle cx="37.5" cy="37.5" r="30.0" fill="none" stroke="#D7F5DE" stroke-width="15"/><path d="M37.5 7.5 A30.0 30.0 0 1 1 16.29 58.71" fill="none" stroke="#0E5B25" stroke-width="15" stroke-linecap="round"/></svg>
<span class="t" style="left:2440.76px;top:2323.24px;font-size:37px;color:#555E68;letter-spacing:0.222px;">Mac OS Device</span>
<svg class="a" style="left:3320.3px;top:2306.7px" width="72" height="72" viewBox="0 0 24 24"><path fill="#555E68" d="M20 3H4c-1.1 0-2 .9-2 2v11c0 1.1.9 2 2 2h3l-1 1v2h12v-2l-1-1h3c1.1 0 2-.9 2-2V5c0-1.1-.9-2-2-2zm0 13H4V5h16v11z"/></svg>
<div style="left:3368px;top:2306.7px;width:24px;height:24px;background:#1F7A1F;border-radius:50%;"></div>
<span class="t" style="left:3408.88px;top:2324.03px;font-size:37px;color:#555E68;letter-spacing:-0.146px;">1 Mac OS Session</span>
<svg class="a" style="left:1375.3px;top:2462.9px" width="72" height="72" viewBox="0 0 24 24"><path fill="#555E68" d="M20 4H4c-1.1 0-1.99.9-1.99 2L2 18c0 1.1.9 2 2 2h16c1.1 0 2-.9 2-2V6c0-1.1-.9-2-2-2zm0 14H4V8l8 5 8-5v10zm-8-7L4 6h16l-8 5z"/></svg>
<span class="t" style="left:1464.45px;top:2480.24px;font-size:37px;color:#555E68;letter-spacing:0.427px;">giana@company.com</span>
<svg class="a" style="left:2347.3px;top:2461.3px" width="75" height="75" viewBox="0 0 75 75"><circle cx="37.5" cy="37.5" r="30.0" fill="none" stroke="#D7F5DE" stroke-width="15"/><path d="M37.5 7.5 A30.0 30.0 0 1 1 16.29 58.71" fill="none" stroke="#0E5B25" stroke-width="15" stroke-linecap="round"/></svg>
<span class="t" style="left:2443.64px;top:2479.24px;font-size:37px;color:#555E68;letter-spacing:0.533px;">Windows Device</span>
<svg class="a" style="left:3320.3px;top:2462.7px" width="72" height="72" viewBox="0 0 24 24"><path fill="#555E68" d="M20 3H4c-1.1 0-2 .9-2 2v11c0 1.1.9 2 2 2h3l-1 1v2h12v-2l-1-1h3c1.1 0 2-.9 2-2V5c0-1.1-.9-2-2-2zm0 13H4V5h16v11z"/></svg>
<div style="left:3368px;top:2462.7px;width:24px;height:24px;background:#1F7A1F;border-radius:50%;"></div>
<span class="t" style="left:3408.88px;top:2480.03px;font-size:37px;color:#555E68;letter-spacing:0.316px;">1 Windows Session</span>
<svg class="a" style="left:1375.3px;top:2618.9px" width="72" height="72" viewBox="0 0 24 24"><path fill="#555E68" d="M20 4H4c-1.1 0-1.99.9-1.99 2L2 18c0 1.1.9 2 2 2h16c1.1 0 2-.9 2-2V6c0-1.1-.9-2-2-2zm0 14H4V8l8 5 8-5v10zm-8-7L4 6h16l-8 5z"/></svg>
<span class="t" style="left:1465.44px;top:2636.24px;font-size:37px;color:#555E68;letter-spacing:0.727px;">terry@company.com</span>
<svg class="a" style="left:2347.3px;top:2617.3px" width="75" height="75" viewBox="0 0 75 75"><circle cx="37.5" cy="37.5" r="30.0" fill="none" stroke="#D7F5DE" stroke-width="15"/><path d="M37.5 7.5 A30.0 30.0 0 1 1 16.29 58.71" fill="none" stroke="#0E5B25" stroke-width="15" stroke-linecap="round"/></svg>
<span class="t" style="left:2440.76px;top:2635.24px;font-size:37px;color:#555E68;letter-spacing:0.222px;">Mac OS Device</span>
<svg class="a" style="left:3320.3px;top:2618.7px" width="72" height="72" viewBox="0 0 24 24"><path fill="#555E68" d="M20 3H4c-1.1 0-2 .9-2 2v11c0 1.1.9 2 2 2h3l-1 1v2h12v-2l-1-1h3c1.1 0 2-.9 2-2V5c0-1.1-.9-2-2-2zm0 13H4V5h16v11z"/></svg>
<div style="left:3368px;top:2618.7px;width:24px;height:24px;background:#1F7A1F;border-radius:50%;"></div>
<span class="t" style="left:3408.88px;top:2636.03px;font-size:37px;color:#555E68;letter-spacing:-0.146px;">1 Mac OS Session</span>
<svg class="a" style="left:1375.3px;top:2774.9px" width="72" height="72" viewBox="0 0 24 24"><path fill="#555E68" d="M20 4H4c-1.1 0-1.99.9-1.99 2L2 18c0 1.1.9 2 2 2h16c1.1 0 2-.9 2-2V6c0-1.1-.9-2-2-2zm0 14H4V8l8 5 8-5v10zm-8-7L4 6h16l-8 5z"/></svg>
<span class="t" style="left:1464.50px;top:2792.24px;font-size:37px;color:#555E68;letter-spacing:0.448px;">zaire@company.com</span>
<svg class="a" style="left:2347.3px;top:2773.3px" width="75" height="75" viewBox="0 0 75 75"><circle cx="37.5" cy="37.5" r="30.0" fill="none" stroke="#D7F5DE" stroke-width="15"/><path d="M37.5 7.5 A30.0 30.0 0 1 1 16.29 58.71" fill="none" stroke="#0E5B25" stroke-width="15" stroke-linecap="round"/></svg>
<span class="t" style="left:2440.76px;top:2791.24px;font-size:37px;color:#555E68;letter-spacing:0.222px;">Mac OS Device</span>
<svg class="a" style="left:3320.3px;top:2774.7px" width="72" height="72" viewBox="0 0 24 24"><path fill="#555E68" d="M20 3H4c-1.1 0-2 .9-2 2v11c0 1.1.9 2 2 2h3l-1 1v2h12v-2l-1-1h3c1.1 0 2-.9 2-2V5c0-1.1-.9-2-2-2zm0 13H4V5h16v11z"/></svg>
<div style="left:3368px;top:2774.7px;width:24px;height:24px;background:#1F7A1F;border-radius:50%;"></div>
<span class="t" style="left:3408.88px;top:2792.03px;font-size:37px;color:#555E68;letter-spacing:-0.146px;">1 Mac OS Session</span>
<span class="t" style="left:3310.15px;top:2936.51px;font-size:42px;color:#555E68;">Rows per page:</span>
<span class="t" style="left:3608.80px;top:2936.51px;font-size:42px;color:#32383E;">10</span>
<span class="t" style="left:3792.59px;top:2935.66px;font-size:43px;color:#171A1C;-webkit-text-stroke-width:1.12px;transform:scaleX(0.8861);">1-5 of 10</span>
<svg class="a" style="left:4042px;top:2921px" width="72" height="72" viewBox="0 0 24 24"><path fill="#77787C" d="M15.41 16.59 10.83 12l4.58-4.59L14 6l-6 6 6 6 1.41-1.41z"/></svg>
<svg class="a" style="left:4170px;top:2921px" width="72" height="72" viewBox="0 0 24 24"><path fill="#77787C" d="M8.59 16.59 13.17 12 8.59 7.41 10 6l6 6-6 6-1.41-1.41z"/></svg>
</div></body></html>
